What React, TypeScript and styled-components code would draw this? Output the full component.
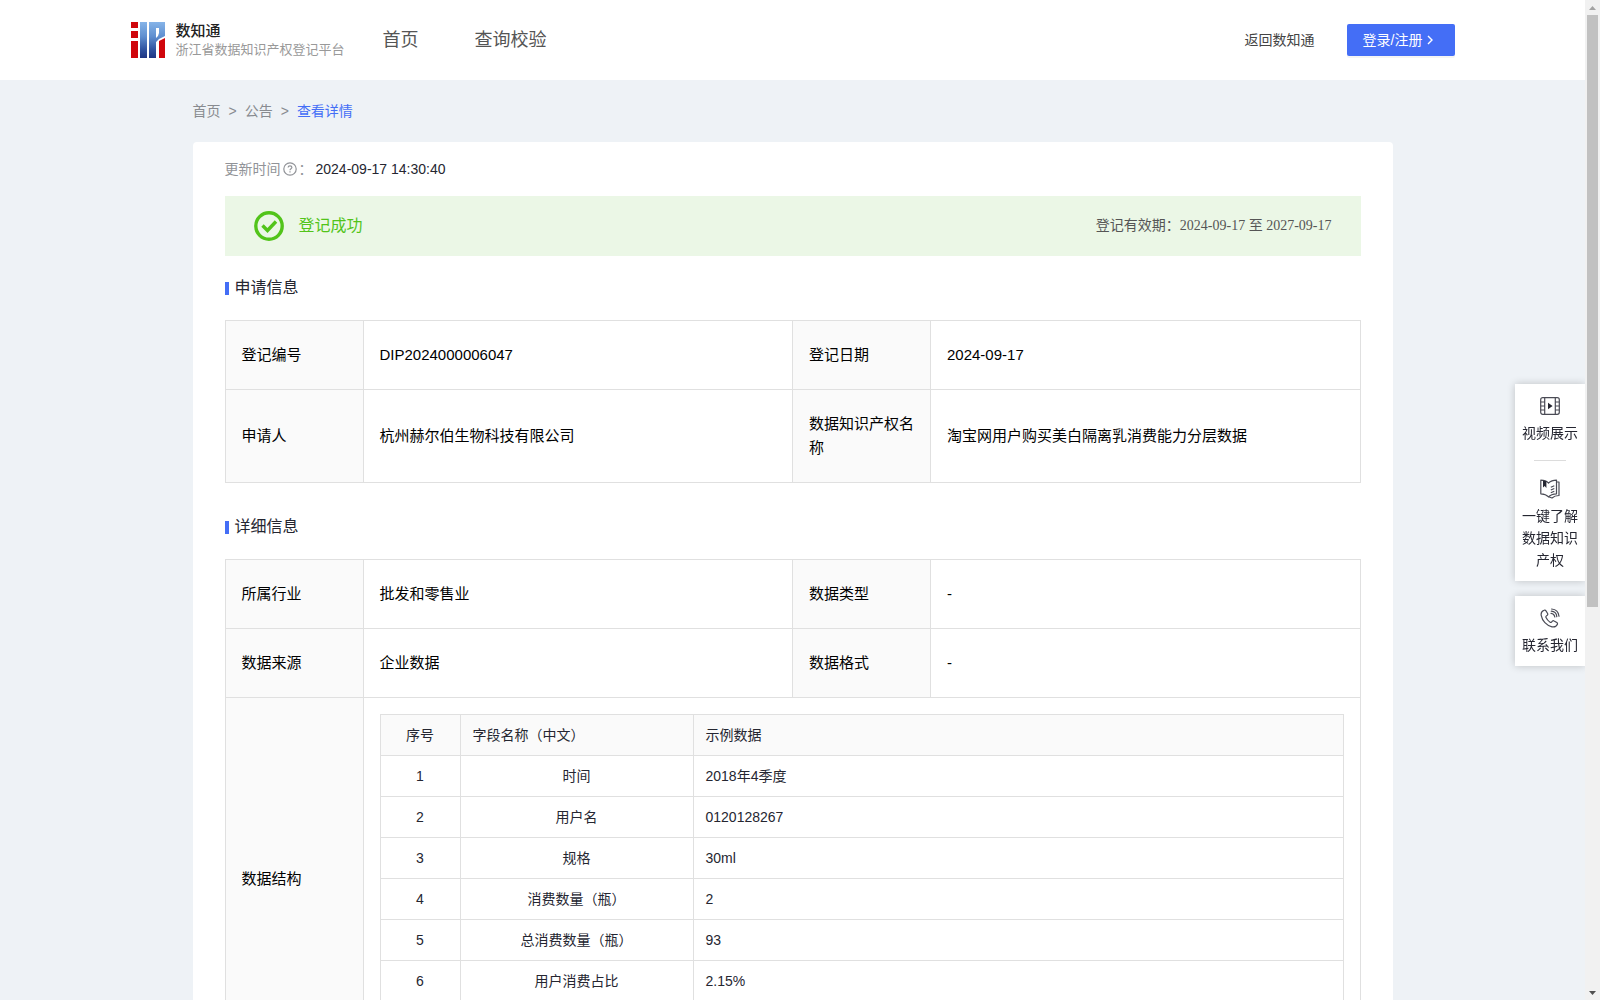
import React from "react";
import styled, { createGlobalStyle } from "styled-components";

const sans = '"Liberation Sans", "Noto Sans CJK SC", sans-serif';
const serif = '"Liberation Serif", "Noto Sans CJK SC", serif';

const GlobalStyle = createGlobalStyle`
  * { box-sizing: border-box; }
  body { margin: 0; font-family: ${sans}; font-size: 14px; line-height: 22px; color: #252631; background: #eef2f6; }
  a { color: inherit; text-decoration: none; }
  svg { display: block; flex: none; }
`;

const Shell = styled.div`
  display: flex;
  height: 100vh;
  overflow: hidden;
`;

const Page = styled.div`
  flex: 1;
  min-width: 0;
  overflow: hidden;
`;

const Header = styled.header`
  background: #fff;
`;

const HeaderInner = styled.div`
  display: flex;
  align-items: center;
  max-width: 1324px;
  height: 80px;
  margin: 0 auto;
`;

const Brand = styled.a`
  display: flex;
  align-items: center;
  gap: 11px;
`;

const BrandName = styled.div`
  font-size: 15px;
  font-weight: 500;
  line-height: 20px;
  color: #222;
`;

const BrandSub = styled.div`
  font-size: 13px;
  line-height: 18px;
  color: #999;
`;

const Nav = styled.nav`
  display: flex;
  flex: 1;
  gap: 56px;
  margin-left: 38px;
  font-size: 18px;
  line-height: 24px;
  color: #555;
`;

const Actions = styled.div`
  display: flex;
  align-items: center;
  gap: 32px;
  color: #444;
`;

const LoginButton = styled.button`
  display: flex;
  align-items: center;
  gap: 2px;
  height: 32px;
  padding: 0 20px 0 16px;
  border: 0;
  border-radius: 2px;
  background: #446ef6;
  box-shadow: 0 2px 0 rgba(0, 0, 0, 0.045);
  color: #fff;
  font: 14px/22px ${sans};
`;

const Main = styled.main`
  max-width: 1200px;
  margin: 0 auto;
  padding-top: 20px;
`;

const Breadcrumb = styled.nav`
  display: flex;
  gap: 8px;
  margin-bottom: 20px;
  color: #888b90;
`;

const Current = styled.a`
  color: #446ef6;
`;

const Card = styled.section`
  padding: 16px 32px;
  border-radius: 4px;
  background: #fff;
`;

const UpdateRow = styled.div`
  display: flex;
  align-items: center;
  color: #919398;
`;

const HelpLabel = styled.span`
  display: flex;
  align-items: center;
  gap: 1px;
`;

const UpdateTime = styled.time`
  margin-left: 3px;
  color: #252631;
`;

const Banner = styled.div`
  display: flex;
  align-items: center;
  height: 60px;
  margin-top: 16px;
  padding: 0 29px;
  background: #ebf7e6;
`;

const Status = styled.strong`
  flex: 1;
  margin-left: 15px;
  font-size: 16px;
  font-weight: 400;
  color: #52c41a;
`;

const Validity = styled.span`
  font-family: ${serif};
  color: #555;
`;

const SectionTitle = styled.h2`
  display: flex;
  align-items: center;
  gap: 6px;
  margin: 20px 0;
  font-size: 16px;
  font-weight: 400;
  line-height: 24px;

  &::before {
    content: "";
    width: 4px;
    height: 13px;
    background: #446ef6;
  }
`;

const InfoTable = styled.table`
  width: 100%;
  margin-bottom: 32px;
  table-layout: fixed;
  border-collapse: collapse;
  font-size: 15px;
  line-height: 24px;
  color: #000;
`;

const LabelCol = styled.col`
  width: 138px;
`;

const InfoLabel = styled.th`
  padding: 22px 16px;
  border: 1px solid #e0e0e0;
  background: #fafafa;
  font-weight: 400;
  text-align: left;
`;

const InfoValue = styled.td`
  padding: 22px 16px;
  border: 1px solid #e0e0e0;
`;

const NestedCell = styled.td`
  padding: 16px;
  border: 1px solid #e0e0e0;
`;

const FieldTable = styled.table`
  width: 100%;
  table-layout: fixed;
  border-collapse: collapse;
  font-size: 14px;
  line-height: 22px;
  color: #252631;
`;

const FieldCol = styled.col<{ $width?: number }>`
  width: ${(p) => (p.$width ? `${p.$width}px` : "auto")};
`;

const FieldHead = styled.th<{ $center?: boolean }>`
  height: 41px;
  padding: 0 12px;
  border: 1px solid #e0e0e0;
  background: #fafafa;
  font-weight: 400;
  text-align: ${(p) => (p.$center ? "center" : "left")};
`;

const FieldCell = styled.td<{ $center?: boolean }>`
  height: 41px;
  padding: 0 12px;
  border: 1px solid #e0e0e0;
  text-align: ${(p) => (p.$center ? "center" : "left")};
`;

const SideDock = styled.aside`
  position: fixed;
  top: 384px;
  right: 15px;
  display: flex;
  flex-direction: column;
  gap: 15px;
  width: 70px;
`;

const SideBox = styled.div`
  display: flex;
  flex-direction: column;
  align-items: center;
  padding: 12px 7px 10px;
  background: #fff;
  box-shadow: 0 0 8px rgba(0, 0, 0, 0.2);
  clip-path: inset(-10px 0 -10px -10px);
`;

const SideLink = styled.a`
  display: flex;
  flex-direction: column;
  align-items: center;
  gap: 6px;
  text-align: center;
`;

const SideDivider = styled.hr`
  width: 32px;
  height: 1px;
  margin: 16px 0 18px;
  border: 0;
  background: #dcdcdc;
`;

const Scrollbar = styled.div`
  display: flex;
  flex-direction: column;
  align-items: center;
  width: 15px;
  background: #f1f1f1;
`;

const ScrollTrack = styled.div`
  flex: 1;
  width: 11px;
`;

const ScrollThumb = styled.div`
  height: 61%;
  background: #c1c1c1;
`;

const ScrollArrow = styled.div<{ $up?: boolean }>`
  display: flex;
  align-items: center;
  justify-content: center;
  height: 15px;
  color: ${(p) => (p.$up ? "#a3a3a3" : "#505050")};
`;

const Logo = () => (
  <svg width="34" height="36" viewBox="0 0 34 36" aria-hidden="true">
    <defs>
      <linearGradient id="blue" x1="0" y1="0" x2="0" y2="36" gradientUnits="userSpaceOnUse">
        <stop offset="0" stopColor="#86b4e8" />
        <stop offset="0.4" stopColor="#5f8fd0" />
        <stop offset="0.75" stopColor="#3155a2" />
        <stop offset="1" stopColor="#1f3583" />
      </linearGradient>
    </defs>
    <path fill="#d0060c" d="M0 0h7v6H0zM0 9h7v7H0zM0 19h7v17H0zM28 19l6-3v20h-6z" />
    <path fill="url(#blue)" d="M9 0h7v36H9zM18 0h16v14l-6 3-3 3v16h-7zM25 6v10l2-2 1-3V6z" fillRule="evenodd" />
  </svg>
);

const Chevron = () => (
  <svg width="10" height="10" viewBox="0 0 10 10" fill="none" stroke="currentColor" strokeWidth="1.4" aria-hidden="true">
    <path d="M3 1l4 4-4 4" />
  </svg>
);

const HelpIcon = () => (
  <svg width="16" height="16" viewBox="0 0 16 16" fill="none" stroke="currentColor" strokeWidth="1.2" aria-hidden="true">
    <circle cx="8" cy="8" r="6.2" />
    <path d="M6.1 6.6c0-1 .8-1.8 1.9-1.8s1.9.7 1.9 1.7c0 1.2-1.9 1.3-1.9 2.7M8 10.2v1.3" />
  </svg>
);

const SuccessIcon = () => (
  <svg width="30" height="30" viewBox="0 0 30 30" fill="none" stroke="#52c41a" aria-hidden="true">
    <circle cx="15" cy="15" r="13.2" strokeWidth="3.4" />
    <path d="M8.5 14.5l5 5 8.5-9" strokeWidth="3.4" />
  </svg>
);

const VideoIcon = () => (
  <svg width="20" height="20" viewBox="0 0 20 20" fill="none" stroke="#4a4b55" strokeWidth="1.2" aria-hidden="true">
    <rect x="0.7" y="1.7" width="18.6" height="16.6" rx="2" />
    <path d="M4.7 1.7v16.6M15.3 1.7v16.6M.7 6h4M.7 10h4M.7 14h4M15.3 6h4M15.3 10h4M15.3 14h4" />
    <path d="M8 6.8v6.4l4.600-3.200z" fill="#252631" stroke="none" />
  </svg>
);

const BookIcon = () => (
  <svg width="20" height="20" viewBox="0 0 20 20" fill="none" stroke="#4a4b55" strokeWidth="1.2" strokeLinejoin="round" aria-hidden="true">
    <path d="M.8 1.2c3 0 5.7.7 7.700 3 2-2 4.600-3 8-3v13.600c-3.300.2-6 .9-8 3-2-2.100-4.500-2.800-7.700-3z" />
    <path d="M16.5 3h2.500v13.500c-3 0-5 .6-7 2.500l-3.500-1.200M10.8 8.200l3.500-1.500M10.800 11l3.500-1.500M10.800 13.800l3.500-1.500" />
    <path d="M3 1.4v7.200l1.700-1.500 1.700 2V2.300z" fill="#252631" stroke="none" />
  </svg>
);

const PhoneIcon = () => (
  <svg width="20" height="20" viewBox="0 0 20 20" fill="none" stroke="#4a4b55" strokeWidth="1.2" strokeLinecap="round" strokeLinejoin="round" aria-hidden="true">
    <path d="M4 2.300C2 3.200.8 5 1.200 7.300c1 5.500 5.300 10.400 10.800 11.500 2.500.5 4.600-.7 5.400-2.600.3-.7 0-1.200-.6-1.600l-2.700-1.700c-.6-.4-1.200-.3-1.700.2l-.9 1c-.5.5-1.100.4-1.600 0-1.700-1.300-3-2.900-3.900-4.700-.3-.6-.1-1.100.4-1.500l.9-.7c.5-.5.6-1.100.3-1.700L6 2.900c-.4-.8-1.200-1-2-.6z" />
    <path d="M11 5.300c2 .2 3.500 1.700 3.800 3.700M11.300 3.200c3 .2 5.200 2.500 5.500 5.400M11.600 1c4.200.3 7 3.200 7.400 7.200" />
  </svg>
);

const Triangle = ({ up }: { up?: boolean }) => (
  <svg width="7" height="4" viewBox="0 0 7 4" fill="currentColor" aria-hidden="true">
    <path d={up ? "M0 4h7L3.5 0z" : "M0 0h7L3.5 4z"} />
  </svg>
);

const InfoCols = () => (
  <colgroup>
    <LabelCol />
    <col />
    <LabelCol />
    <col />
  </colgroup>
);

const InfoRow = ({ items }: { items: [string, string][] }) => (
  <tr>
    {items.map(([label, value]) => (
      <React.Fragment key={label}>
        <InfoLabel scope="row">{label}</InfoLabel>
        <InfoValue>{value}</InfoValue>
      </React.Fragment>
    ))}
  </tr>
);

const fields = [
  ["1", "时间", "2018年4季度"],
  ["2", "用户名", "0120128267"],
  ["3", "规格", "30ml"],
  ["4", "消费数量（瓶）", "2"],
  ["5", "总消费数量（瓶）", "93"],
  ["6", "用户消费占比", "2.15%"],
  ["", "", ""],
];

export default function App() {
  return (
    <Shell>
      <GlobalStyle />
      <Page>
        <Header>
          <HeaderInner>
            <Brand href="#">
              <Logo />
              <div>
                <BrandName>数知通</BrandName>
                <BrandSub>浙江省数据知识产权登记平台</BrandSub>
              </div>
            </Brand>
            <Nav>
              <a href="#">首页</a>
              <a href="#">查询校验</a>
            </Nav>
            <Actions>
              <a href="#">返回数知通</a>
              <LoginButton type="button">
                登录/注册
                <Chevron />
              </LoginButton>
            </Actions>
          </HeaderInner>
        </Header>
        <Main>
          <Breadcrumb>
            <a href="#">首页</a>
            <span>&gt;</span>
            <a href="#">公告</a>
            <span>&gt;</span>
            <Current href="#">查看详情</Current>
          </Breadcrumb>
          <Card>
            <UpdateRow>
              <HelpLabel>
                更新时间
                <HelpIcon />
                <span>：</span>
              </HelpLabel>
              <UpdateTime>2024-09-17 14:30:40</UpdateTime>
            </UpdateRow>
            <Banner>
              <SuccessIcon />
              <Status>登记成功</Status>
              <Validity>登记有效期：2024-09-17 至 2027-09-17</Validity>
            </Banner>
            <SectionTitle>申请信息</SectionTitle>
            <InfoTable>
              <InfoCols />
              <tbody>
                <InfoRow items={[["登记编号", "DIP2024000006047"], ["登记日期", "2024-09-17"]]} />
                <InfoRow items={[["申请人", "杭州赫尔伯生物科技有限公司"], ["数据知识产权名称", "淘宝网用户购买美白隔离乳消费能力分层数据"]]} />
              </tbody>
            </InfoTable>
            <SectionTitle>详细信息</SectionTitle>
            <InfoTable>
              <InfoCols />
              <tbody>
                <InfoRow items={[["所属行业", "批发和零售业"], ["数据类型", "-"]]} />
                <InfoRow items={[["数据来源", "企业数据"], ["数据格式", "-"]]} />
                <tr>
                  <InfoLabel scope="row">数据结构</InfoLabel>
                  <NestedCell colSpan={3}>
                    <FieldTable>
                      <colgroup>
                        <FieldCol $width={80} />
                        <FieldCol $width={233} />
                        <FieldCol />
                      </colgroup>
                      <thead>
                        <tr>
                          <FieldHead $center>序号</FieldHead>
                          <FieldHead>字段名称（中文）</FieldHead>
                          <FieldHead>示例数据</FieldHead>
                        </tr>
                      </thead>
                      <tbody>
                        {fields.map(([no, name, sample], i) => (
                          <tr key={i}>
                            <FieldCell $center>{no}</FieldCell>
                            <FieldCell $center>{name}</FieldCell>
                            <FieldCell>{sample}</FieldCell>
                          </tr>
                        ))}
                      </tbody>
                    </FieldTable>
                  </NestedCell>
                </tr>
              </tbody>
            </InfoTable>
          </Card>
        </Main>
      </Page>
      <SideDock>
        <SideBox>
          <SideLink href="#">
            <VideoIcon />
            视频展示
          </SideLink>
          <SideDivider />
          <SideLink href="#">
            <BookIcon />
            一键了解数据知识产权
          </SideLink>
        </SideBox>
        <SideBox>
          <SideLink href="#">
            <PhoneIcon />
            联系我们
          </SideLink>
        </SideBox>
      </SideDock>
      <Scrollbar aria-hidden="true">
        <ScrollArrow $up>
          <Triangle up />
        </ScrollArrow>
        <ScrollTrack>
          <ScrollThumb />
        </ScrollTrack>
        <ScrollArrow>
          <Triangle />
        </ScrollArrow>
      </Scrollbar>
    </Shell>
  );
}
